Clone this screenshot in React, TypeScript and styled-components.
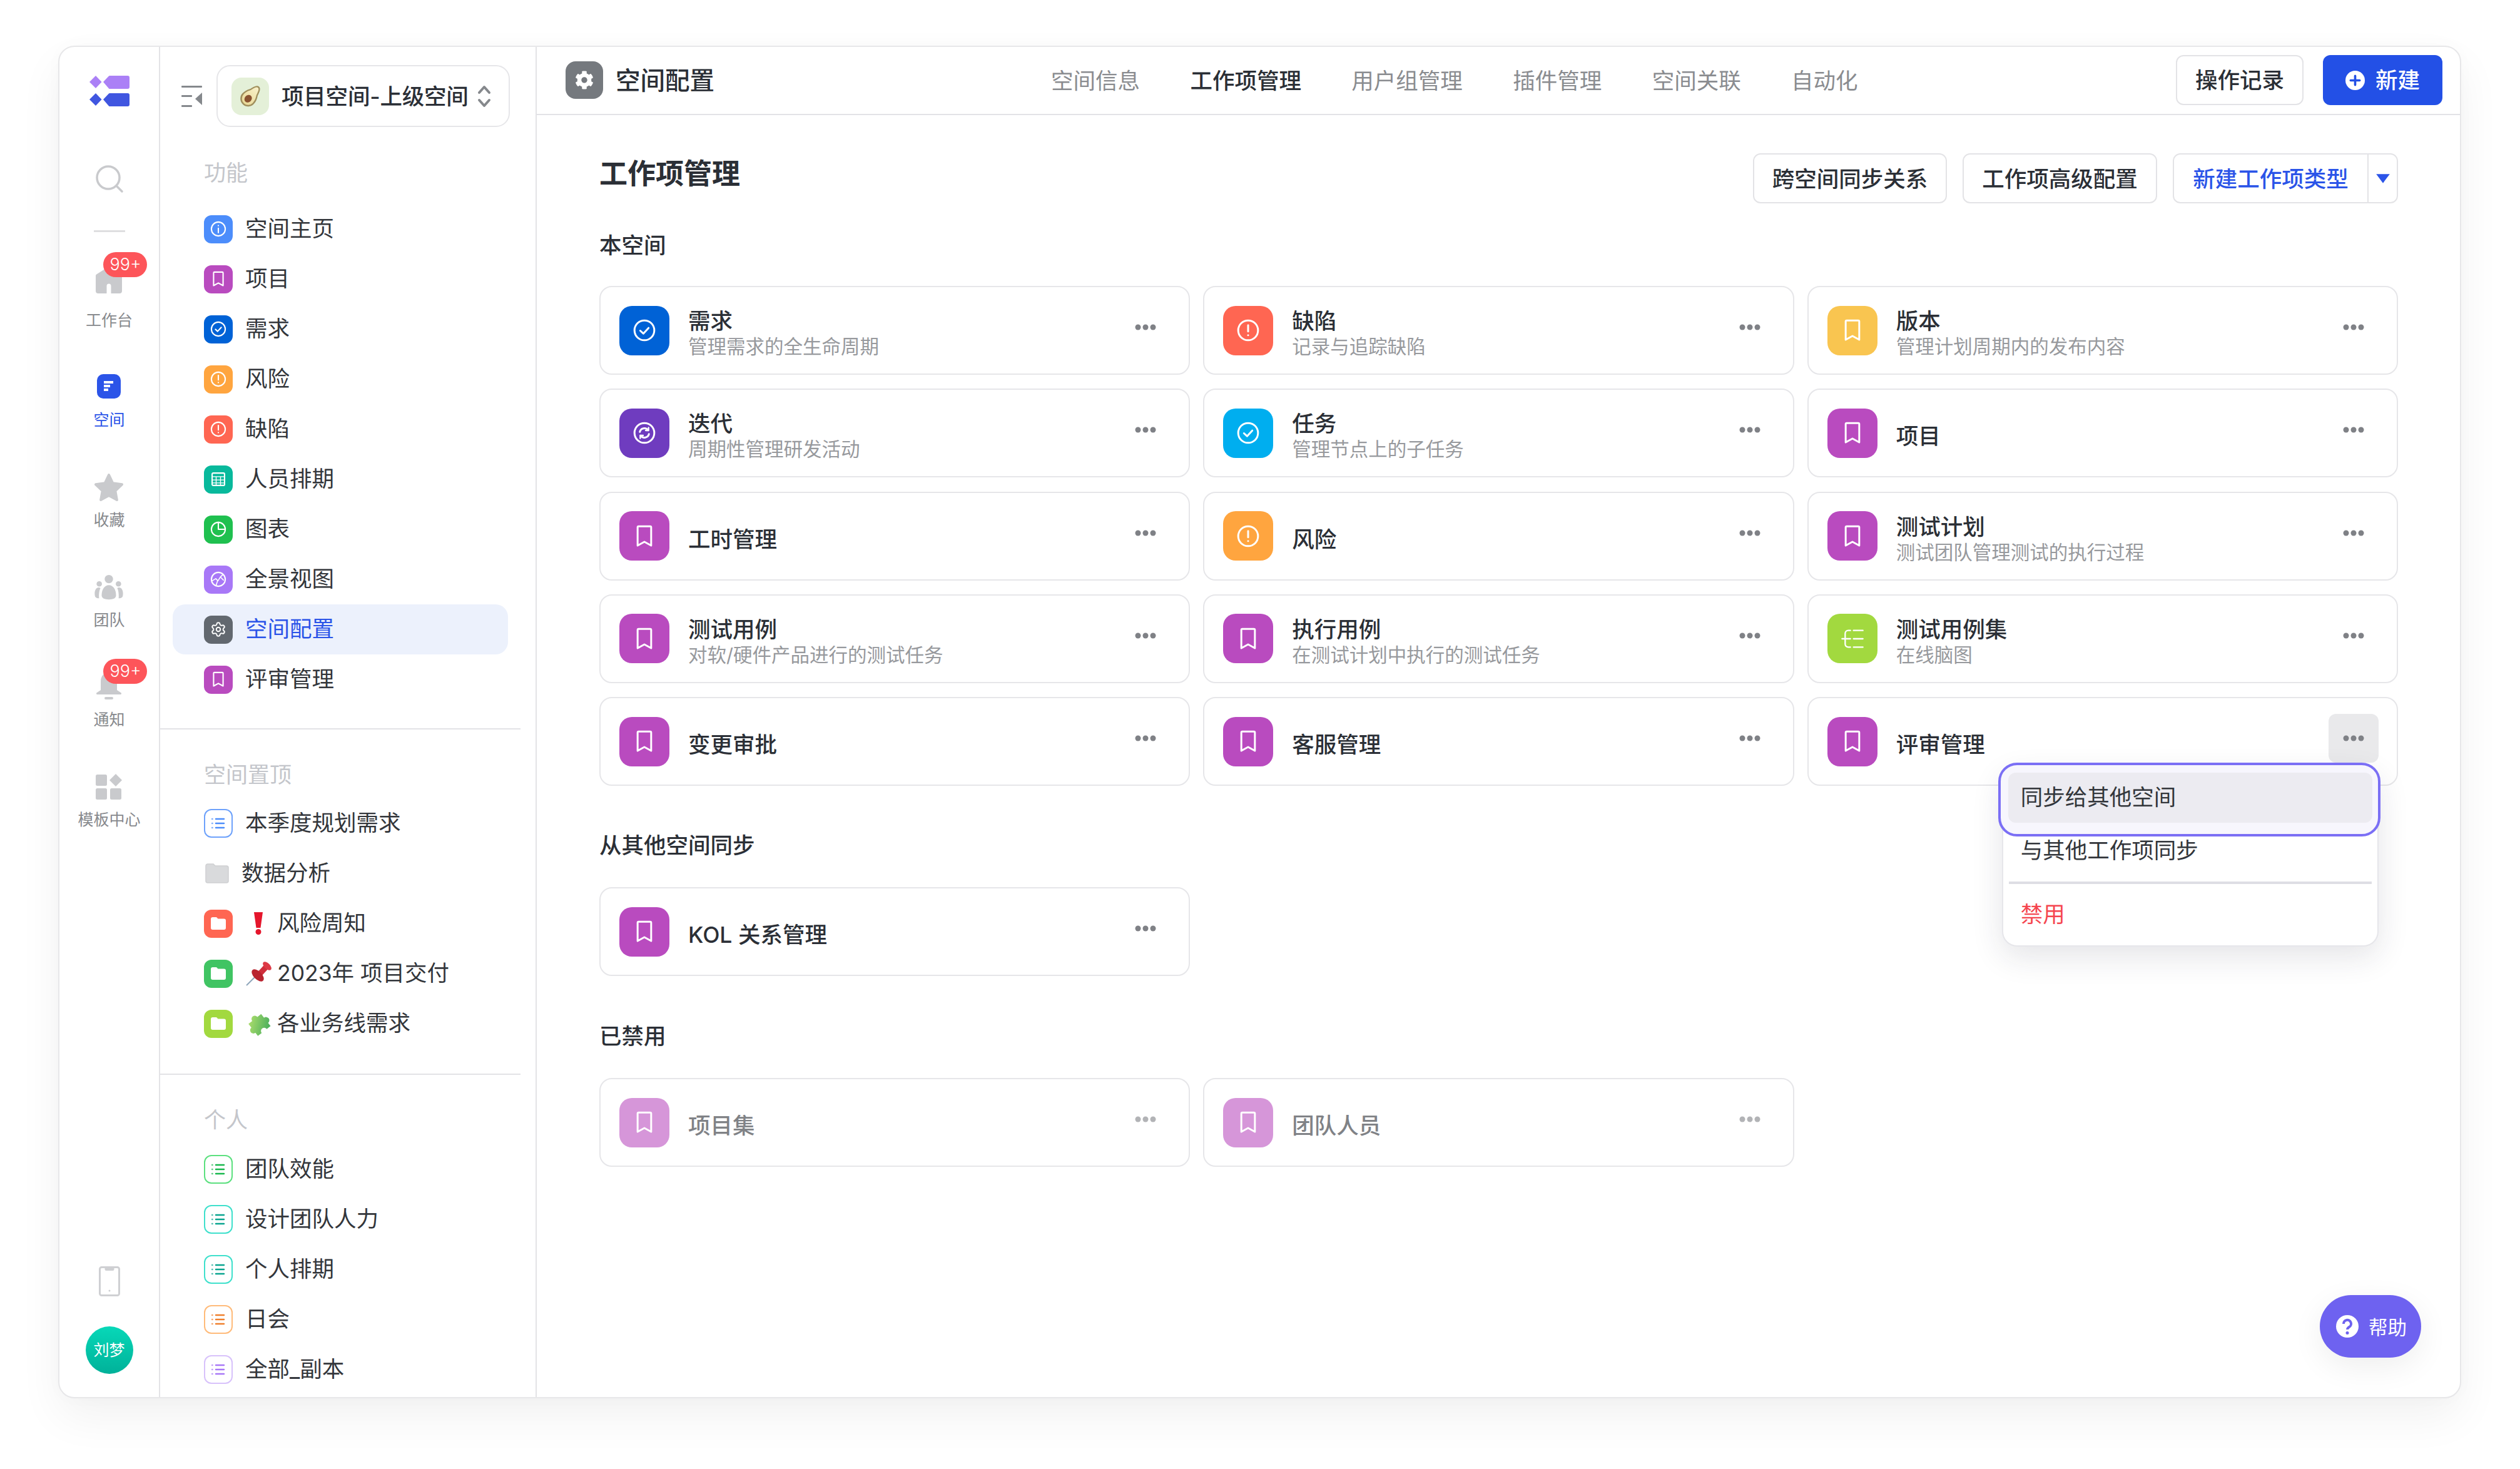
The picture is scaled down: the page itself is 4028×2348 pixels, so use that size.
import React from 'react';
import styled, { createGlobalStyle } from 'styled-components';
import { Settings } from 'lucide-react';
import { FaCog } from 'react-icons/fa';

const Global = createGlobalStyle`
  html, body { margin: 0; padding: 0; background: #fff; }
  body { font-family: Inter, "Noto Sans CJK SC", "Noto Sans", sans-serif; color: #2b2f36; }
  * { box-sizing: border-box; }
`;

const Page = styled.div`
  width: 4028px;
  height: 2348px;
  padding: 73px 94px 113px 93px;
`;
const Window = styled.div`
  height: 100%;
  display: flex;
  overflow: hidden;
  background: #fff;
  border: 2px solid #e7e7e9;
  border-radius: 26px;
  box-shadow: 0 30px 70px rgba(0, 0, 0, 0.055), 0 0 30px rgba(0, 0, 0, 0.02);
`;

/* ---------- rail ---------- */
const Rail = styled.nav`
  flex: 0 0 161px;
  display: flex;
  flex-direction: column;
  align-items: center;
  padding: 45px 0 37px;
  border-right: 2px solid #e3e3e6;
`;
const Search = styled.svg`
  width: 46px;
  height: 46px;
  margin-top: 93px;
`;
const RailRule = styled.div`
  width: 50px;
  height: 3px;
  margin: 59px 0 30px;
  background: #dedee0;
`;
const RailItem = styled.div`
  height: 159.7px;
  display: flex;
  flex-direction: column;
  align-items: center;
  justify-content: flex-end;
  padding-bottom: 34px;
`;
const RailSlot = styled.div<{ $lift?: number }>`
  position: relative;
  width: 46px;
  height: 46px;
  display: flex;
  align-items: center;
  justify-content: center;
  margin-bottom: ${p => 14 + (p.$lift ?? 0)}px;
`;
const RailLabel = styled.div<{ $on?: boolean }>`
  font-size: 25px;
  line-height: 30px;
  white-space: nowrap;
  color: ${p => (p.$on ? '#2b54e8' : '#87898d')};
`;
const Badge = styled.span`
  position: absolute;
  left: 14px;
  top: -20px;
  width: 70px;
  height: 40px;
  border-radius: 20px;
  background: #fd555a;
  color: #fff;
  font-size: 27px;
  font-weight: 300;
  line-height: 40px;
  text-align: center;
`;
const SpaceBox = styled.div`
  width: 38px;
  height: 39px;
  border-radius: 10px;
  background: #2b54e8;
  display: flex;
  align-items: center;
  justify-content: center;
`;
const RailBottom = styled.div`
  margin-top: auto;
  display: flex;
  flex-direction: column;
  align-items: center;
  gap: 48px;
`;
const Avatar = styled.div`
  width: 76px;
  height: 76px;
  border-radius: 50%;
  background: linear-gradient(180deg, #07d8b8, #00b199);
  color: #fff;
  font-size: 25px;
  line-height: 76px;
  text-align: center;
`;

/* ---------- sidebar ---------- */
const Sidebar = styled.aside`
  flex: 0 0 602px;
  display: flex;
  flex-direction: column;
  overflow: hidden;
  border-right: 2px solid #e3e3e6;
`;
const SideHead = styled.div`
  display: flex;
  align-items: center;
  gap: 23px;
  padding: 29px 0 0 34px;
`;
const Selector = styled.div`
  width: 469px;
  height: 99px;
  display: flex;
  align-items: center;
  padding: 0 22px;
  border: 2px solid #e6e6e9;
  border-radius: 22px;
`;
const Avocado = styled.div`
  flex: none;
  width: 60px;
  height: 60px;
  border-radius: 16px;
  background: #e4f0d8;
  display: flex;
  align-items: center;
  justify-content: center;
`;
const SelectorText = styled.div`
  margin-left: 20px;
  padding-top: 2px;
  font-size: 35.5px;
  line-height: 50px;
  font-weight: 500;
  white-space: nowrap;
  color: #2b2f36;
  letter-spacing: -0.2px;
`;
const Chevrons = styled.svg`
  width: 24px;
  height: 36px;
  margin-left: auto;
  margin-right: 5px;
`;
const SideLabel = styled.div<{ $mt: number; $mb: number }>`
  height: 50px;
  margin: ${p => p.$mt}px 0 ${p => p.$mb}px 70px;
  font-size: 35px;
  line-height: 50px;
  color: #c4c6cb;
`;
const SideRule = styled.div<{ $mt: number }>`
  flex: none;
  width: 576px;
  height: 2px;
  margin-top: ${p => p.$mt}px;
  background: #e3e3e6;
`;
const Row = styled.div<{ $on?: boolean }>`
  flex: none;
  height: 80px;
  margin: 0 44px 0 20px;
  padding-left: 50px;
  display: flex;
  align-items: center;
  border-radius: 20px;
  background: ${p => (p.$on ? '#ecf1fc' : 'transparent')};
`;
const RowIcon = styled.div<{ $c: string }>`
  flex: none;
  width: 46px;
  height: 45px;
  border-radius: 12px;
  background: ${p => p.$c};
  display: flex;
  align-items: center;
  justify-content: center;
  color: #fff;
`;
const OutlineIcon = styled.div<{ $c: string }>`
  flex: none;
  width: 46px;
  height: 46px;
  border-radius: 12px;
  border: 2.5px solid ${p => p.$c};
  display: flex;
  align-items: center;
  justify-content: center;
`;
const FolderMark = styled.svg`
  width: 24px;
  height: 20px;
`;
const FolderGrey = styled.svg`
  flex: none;
  width: 38px;
  height: 32px;
  margin-left: 2px;
`;
const RowText = styled.span<{ $on?: boolean; $ml?: number }>`
  margin-left: ${p => p.$ml ?? 20}px;
  font-size: 35.5px;
  line-height: 50px;
  white-space: nowrap;
  color: ${p => (p.$on ? '#2b54e8' : '#33363b')};
`;
const EmojiSlot = styled.span`
  flex: none;
  width: 42px;
  height: 40px;
  margin: 0 -11px 0 20px;
  display: flex;
  align-items: center;
  justify-content: center;
`;

/* ---------- main ---------- */
const Main = styled.main`
  position: relative;
  flex: 1;
  min-width: 0;
  display: flex;
  flex-direction: column;
`;
const TopBar = styled.header`
  flex: none;
  height: 109px;
  display: flex;
  align-items: center;
  padding: 0 28px 2px 46px;
  border-bottom: 2px solid #e3e3e6;
`;
const GearBox = styled.div`
  flex: none;
  width: 60px;
  height: 60px;
  border-radius: 16px;
  background: #75797e;
  display: flex;
  align-items: center;
  justify-content: center;
  color: #fff;
`;
const TopTitle = styled.h1`
  margin: 0 0 0 20px;
  padding-top: 3px;
  font-size: 39.5px;
  line-height: 56px;
  font-weight: 500;
  white-space: nowrap;
`;
const Tabs = styled.div`
  display: flex;
  gap: 80.4px;
  margin-left: 538px;
  padding-top: 5px;
`;
const Tab = styled.span<{ $on?: boolean }>`
  font-size: 35.5px;
  line-height: 50px;
  white-space: nowrap;
  font-weight: ${p => (p.$on ? 500 : 400)};
  color: ${p => (p.$on ? '#2b2f36' : '#8a8c90')};
`;
const TopActions = styled.div`
  margin-left: auto;
  display: flex;
  gap: 31px;
`;
const Button = styled.button<{ $w: number }>`
  width: ${p => p.$w}px;
  height: 80px;
  padding: 3px 0 0;
  background: #fff;
  border: 2px solid #e3e3e6;
  border-radius: 12px;
  font: 500 35.5px/50px Inter, "Noto Sans CJK SC", sans-serif;
  color: #2b2f36;
  white-space: nowrap;
`;
const PrimaryButton = styled.button`
  width: 191px;
  height: 80px;
  display: flex;
  align-items: center;
  justify-content: center;
  gap: 17px;
  padding: 2px 0 0;
  border: 0;
  border-radius: 12px;
  background: #2350e6;
  color: #fff;
  font: 500 35.5px/50px Inter, "Noto Sans CJK SC", sans-serif;
`;
const Content = styled.div`
  flex: 1;
  padding: 61px 99px 0 100px;
`;
const ContentHead = styled.div`
  display: flex;
`;
const ContentTitle = styled.h2`
  margin: 0;
  font-size: 45px;
  line-height: 66px;
  font-weight: 600;
  white-space: nowrap;
`;
const ContentActions = styled.div`
  margin-left: auto;
  display: flex;
  gap: 25px;
`;
const SplitButton = styled.div`
  width: 360px;
  height: 80px;
  display: flex;
  align-items: stretch;
  border: 2px solid #e3e3e6;
  border-radius: 12px;
`;
const SplitMain = styled.span`
  flex: 1;
  text-align: center;
  font-size: 35.5px;
  line-height: 79px;
  font-weight: 500;
  color: #2b54e8;
  white-space: nowrap;
`;
const SplitArrow = styled.span`
  flex: 0 0 47px;
  display: flex;
  align-items: center;
  justify-content: center;
  border-left: 2px solid #e3e3e6;
`;
const Heading = styled.h3<{ $mt: number; $mb: number }>`
  margin: ${p => p.$mt}px 0 ${p => p.$mb}px;
  font-size: 35.5px;
  line-height: 40px;
  font-weight: 500;
  white-space: nowrap;
`;
const Cards = styled.div`
  display: grid;
  grid-template-columns: repeat(3, 1fr);
  column-gap: 21px;
  row-gap: 22.25px;
`;
const Card = styled.div`
  position: relative;
  height: 142px;
  display: flex;
  align-items: center;
  padding: 0 29px 0 30px;
  background: #fff;
  border: 2px solid #e6e6e9;
  border-radius: 20px;
`;
const CardIcon = styled.div<{ $c: string; $off?: boolean }>`
  flex: none;
  width: 80px;
  height: 79px;
  border-radius: 20px;
  background: ${p => p.$c};
  opacity: ${p => (p.$off ? 0.58 : 1)};
  display: flex;
  align-items: center;
  justify-content: center;
  color: #fff;
`;
const CardText = styled.div`
  flex: 1;
  min-width: 0;
  margin-left: 30px;
  padding-top: 12px;
`;
const CardTitle = styled.div<{ $off?: boolean }>`
  font-size: 35.5px;
  line-height: 40px;
  font-weight: 500;
  color: ${p => (p.$off ? '#808286' : '#2b2f36')};
  white-space: nowrap;
`;
const CardSub = styled.div`
  font-size: 30.5px;
  line-height: 40px;
  color: #97999d;
  white-space: nowrap;
`;
const More = styled.div<{ $on?: boolean; $off?: boolean }>`
  flex: none;
  align-self: flex-start;
  width: 80px;
  height: 78px;
  margin-top: 25px;
  border-radius: 12px;
  background: ${p => (p.$on ? '#e9e9eb' : 'transparent')};
  display: flex;
  align-items: center;
  justify-content: center;
  opacity: ${p => (p.$off ? 0.6 : 1)};
`;
const Menu = styled.div`
  position: absolute;
  z-index: 3;
  left: 309px;
  top: 109px;
  width: 602px;
  height: 288px;
  background: #fff;
  border: 2px solid #e6e6ea;
  border-radius: 24px;
  box-shadow: 0 16px 50px rgba(30, 30, 60, 0.12);
`;
const MenuFocus = styled.div`
  margin: -8px -5px 0 -8px;
  padding: 12px 9px 18px 12px;
  height: 118px;
  background: #f7f6fd;
  border: 4px solid #7b6ff5;
  border-radius: 30px;
`;
const MenuHover = styled.div`
  height: 80px;
  padding-left: 20px;
  border-radius: 12px;
  background: #ecebf1;
  font-size: 35.5px;
  line-height: 80px;
  color: #33363b;
`;
const MenuItem = styled.div<{ $danger?: boolean; $h: number }>`
  height: ${p => p.$h}px;
  padding-left: 28px;
  font-size: 35.5px;
  line-height: ${p => p.$h}px;
  color: ${p => (p.$danger ? '#f5454f' : '#33363b')};
`;
const MenuRule = styled.div`
  height: 4px;
  margin: 26px 9px 0 9px;
  background: #dedee4;
`;
const Help = styled.div`
  position: absolute;
  right: 62px;
  bottom: 63px;
  width: 162px;
  height: 100px;
  border-radius: 50px;
  background: #6e62f0;
  color: #fff;
  display: flex;
  align-items: center;
  gap: 16px;
  padding-left: 26px;
  font-size: 30.5px;
  box-shadow: 0 14px 50px rgba(0, 0, 0, 0.07);
`;

/* ---------- drawings ---------- */
type Kind = 'info' | 'bookmark' | 'check' | 'alert' | 'table' | 'pie' | 'globe' | 'loop' | 'mind';

const TypeGlyph = ({ kind, size }: { kind: Kind; size: number }) => {
  const common = { fill: 'none', stroke: '#fff', strokeWidth: 1.8, strokeLinecap: 'round' as const, strokeLinejoin: 'round' as const };
  return (
    <svg width={size} height={size} viewBox="0 0 24 24" {...common}>
      {kind === 'bookmark' && <path d="M5.5 3.5a1 1 0 0 1 1-1h11a1 1 0 0 1 1 1V21l-6.500-3.600L5.500 21Z" />}
      {kind === 'check' && (<><circle cx="12" cy="12" r="9.500" /><path d="M8 12.300l3 2.800 5-5.400" /></>)}
      {kind === 'alert' && (<><circle cx="12" cy="12" r="9.500" /><path d="M12 7v6" /><path d="M12 16.600v.1" /></>)}
      {kind === 'info' && (<><circle cx="12" cy="12" r="9.500" /><path d="M12 11v6" /><path d="M12 7.400v.1" /></>)}
      {kind === 'table' && (<><rect x="3.500" y="3.500" width="17" height="17" rx="1.500" /><path d="M3.500 8.500h17M3.500 13h17M3.500 17h17M9 8.500v12M15 8.500v12" strokeWidth="1.200" /></>)}
      {kind === 'pie' && (<><circle cx="12" cy="12" r="9.500" /><path d="M12 2.500V12h8" /></>)}
      {kind === 'globe' && (<><circle cx="12" cy="12" r="9.500" /><path d="M3.500 14l5-3 3 3 3.500-5.500 3.500-3M9 20l2-6M15 9l4 4" strokeWidth="1.400" /></>)}
      {kind === 'loop' && (<><circle cx="12" cy="12" r="9.500" /><path d="M7.600 11a4.500 4.500 0 0 1 8-1.600M16.400 13a4.500 4.500 0 0 1-8 1.600" /><path d="M16 6.800v2.800h-2.800M8 17.200v-2.800h2.800" strokeWidth="1.400" /></>)}
      {kind === 'mind' && (<><path d="M10 4H8a3 3 0 0 0-3 3v10a3 3 0 0 0 3 3h2" strokeWidth="1.400" /><path d="M2 12h8M13 4h9M13 12h9M13 20h9" strokeWidth="1.400" /></>)}
    </svg>
  );
};

const Dots = () => (
  <svg width="34" height="10" viewBox="0 0 34 10" fill="#7f8186">
    <circle cx="5" cy="5" r="4.500" /><circle cx="17" cy="5" r="4.500" /><circle cx="29" cy="5" r="4.500" />
  </svg>
);

const ListGlyph = ({ c }: { c: string }) => (
  <svg width="24" height="20" viewBox="0 0 24 20" stroke={c} strokeWidth="2.400" strokeLinecap="round" fill="none">
    <path d="M8 3h13M8 10h13M8 17h13" /><path d="M2 3h.6M2 10h.6M2 17h.6" opacity=".7" />
  </svg>
);

const Logo = () => (
  <svg width="65" height="50" viewBox="0 0 65 50">
    <g fill="#ab80f6">
      <path d="M11 1l9.500 10L11 21 1 11Z" />
      <path d="M23 11L32 1.500a2 2 0 0 1 1.500-.5H62a3 3 0 0 1 3 3v15a3 3 0 0 1-3 3H33.500a2 2 0 0 1-1.500-.6Z" />
    </g>
    <g fill="#4056e0">
      <path d="M11 29l9.500 10L11 49 1 39Z" />
      <path d="M23 39l9-9.500a2 2 0 0 1 1.500-.5H62a3 3 0 0 1 3 3v15a3 3 0 0 1-3 3H33.500a2 2 0 0 1-1.500-.6Z" />
    </g>
  </svg>
);

const grey = '#c9cacd';
const HomeIcon = () => (
  <svg width="42" height="46" viewBox="0 0 42 46" fill={grey}>
    <path d="M21 3L40 15a3 3 0 0 1 2 3V42a4 4 0 0 1-4 4H24.500V34a3.500 3.500 0 0 0-7 0V46H4a4 4 0 0 1-4-4V18a3 3 0 0 1 2-3Z" />
  </svg>
);
const StarIcon = () => (
  <svg width="46" height="46" viewBox="0 0 46 46" fill={grey} stroke={grey} strokeWidth="4" strokeLinejoin="round">
    <path d="M23 3l6.300 13.300 14.700 2-10.700 10.200 2.600 14.500L23 36l-12.900 7 2.600-14.500L2 18.300l14.700-2Z" />
  </svg>
);
const TeamIcon = () => (
  <svg width="48" height="42" viewBox="0 0 48 42" fill={grey}>
    <circle cx="24" cy="7" r="7" /><circle cx="8" cy="15" r="4.500" /><circle cx="40" cy="15" r="4.500" />
    <path d="M12 34c0-10 5-17 12-17s12 7 12 17c0 5-5 7-12 7s-12-2-12-7Z" />
    <path d="M1 36c-2-8 1-15 6-15 1 0 2 .3 3 1-1.500 3-2.500 7-2.500 14 0 1 0 2 .4 3-3 0-5.900-1-6.900-3ZM47 36c2-8-1-15-6-15-1 0-2 .3-3 1 1.500 3 2.500 7 2.500 14 0 1 0 2-.4 3 3 0 5.900-1 6.900-3Z" />
  </svg>
);
const BellIcon = () => (
  <svg width="42" height="46" viewBox="0 0 42 46" fill={grey}>
    <path d="M21 2c-8 0-13 6-13 14v14l-6 4a1.500 1.500 0 0 0 1 3h36a1.500 1.500 0 0 0 1-3l-6-4V16c0-8-5-14-13-14Z" />
    <rect x="14" y="41" width="14" height="4" rx="2" />
  </svg>
);
const GridIcon = () => (
  <svg width="42" height="42" viewBox="0 0 42 42" fill={grey}>
    <rect x="0" y="1" width="18" height="18" rx="2.500" />
    <rect x="0" y="23" width="18" height="18" rx="2.500" />
    <rect x="23" y="23" width="18" height="18" rx="2.500" />
    <path d="M32 0l10 10-10 10-10-10Z" />
  </svg>
);
const PhoneIcon = () => (
  <svg width="34" height="48" viewBox="0 0 34 48" fill="none" stroke="#cfd0d3" strokeWidth="3">
    <rect x="1.500" y="1.500" width="31" height="45" rx="3" />
    <path d="M11 2.500h12v2a1 1 0 0 1-1 1H12a1 1 0 0 1-1-1Z" fill="#cfd0d3" />
    <circle cx="17" cy="39" r="1.500" fill="#cfd0d3" stroke="none" />
  </svg>
);
const AvocadoIcon = () => (
  <svg width="42" height="42" viewBox="0 0 42 42">
    <defs>
      <linearGradient id="avoFlesh" x1="0" y1="0" x2="0" y2="1">
        <stop offset="0" stopColor="#f8f0c8" /><stop offset="1" stopColor="#e9d998" />
      </linearGradient>
    </defs>
    <g transform="rotate(42 21 21)">
      <path d="M21 0c4.500 0 6.500 6 8 12 3 5 4.500 9 4.500 14a12.500 12.500 0 0 1-25 0c0-5 1.500-9 4.500-14 1.500-6 3.500-12 8-12Z" fill="#a08f5c" />
      <path d="M21 2.500c3 0 4.500 5 6 10.500 3 5 4 8.500 4 13a10 10 0 0 1-20 0c0-4.500 1-8 4-13 1.500-5.500 3-10.500 6-10.500Z" fill="url(#avoFlesh)" />
      <ellipse cx="21" cy="26" rx="5.500" ry="6.500" fill="#8a5230" />
    </g>
  </svg>
);

const WhiteFolder = () => (
  <FolderMark viewBox="0 0 24 20" fill="#fff">
    <path d="M0 3a3 3 0 0 1 3-3h6l2.500 2.500H21a3 3 0 0 1 3 3V17a3 3 0 0 1-3 3H3a3 3 0 0 1-3-3Z" />
  </FolderMark>
);

const Exclaim = () => (
  <svg width="14" height="36" viewBox="0 0 14 36">
    <path d="M0 0h14l-3.500 25h-7Z" fill="#e5162c" /><circle cx="7" cy="31.500" r="4.500" fill="#e5162c" />
  </svg>
);
const Pin = () => (
  <svg width="42" height="40" viewBox="0 0 42 40">
    <path d="M2 39l18-18" stroke="#8fa6bb" strokeWidth="2" />
    <path d="M20 24L33 10" stroke="#cf2f3c" strokeWidth="9" />
    <ellipse cx="20" cy="23" rx="12" ry="6.500" transform="rotate(45 20 23)" fill="#b9232f" />
    <ellipse cx="35" cy="8" rx="8.500" ry="4.500" transform="rotate(45 35 8)" fill="#dd3a46" />
  </svg>
);
const Puzzle = () => (
  <svg width="42" height="40" viewBox="3 3 36 34">
    <defs>
      <linearGradient id="puzzleFill" x1="0" y1="0" x2="1" y2="1">
        <stop offset="0" stopColor="#bde56f" /><stop offset="1" stopColor="#3fa95a" />
      </linearGradient>
    </defs>
    <path
      transform="rotate(-38 21 20)"
      d="M10 12h6.500a4.500 4.500 0 1 1 9 0H32v6.500a4.500 4.500 0 1 1 0 9V33h-6.500a4.500 4.500 0 1 0-9 0H10v-5.500a4.500 4.500 0 1 1 0-9Z"
      fill="url(#puzzleFill)"
    />
  </svg>
);

/* ---------- data ---------- */
const PURPLE = '#b94bbf';
const fnRows: { c: string; k?: Kind; t: string; on?: boolean }[] = [
  { c: '#4c8dfb', k: 'info', t: '空间主页' },
  { c: PURPLE, k: 'bookmark', t: '项目' },
  { c: '#0062d6', k: 'check', t: '需求' },
  { c: '#ffa53f', k: 'alert', t: '风险' },
  { c: '#ff6652', k: 'alert', t: '缺陷' },
  { c: '#08b99c', k: 'table', t: '人员排期' },
  { c: '#1fc04f', k: 'pie', t: '图表' },
  { c: '#a878f7', k: 'globe', t: '全景视图' },
  { c: '#62686f', t: '空间配置', on: true },
  { c: PURPLE, k: 'bookmark', t: '评审管理' },
];
const personal = [
  { b: '#5ce07f', l: '#17b84c', t: '团队效能' },
  { b: '#3fe0cc', l: '#08a48f', t: '设计团队人力' },
  { b: '#3fe0cc', l: '#08a48f', t: '个人排期' },
  { b: '#ffbb7a', l: '#ef7f2c', t: '日会' },
  { b: '#d8c2fb', l: '#a878f7', t: '全部_副本' },
];
const cardsA: { c: string; k: Kind; t: string; s?: string }[] = [
  { c: '#0062d6', k: 'check', t: '需求', s: '管理需求的全生命周期' },
  { c: '#ff6652', k: 'alert', t: '缺陷', s: '记录与追踪缺陷' },
  { c: '#f9c550', k: 'bookmark', t: '版本', s: '管理计划周期内的发布内容' },
  { c: '#6f3cbf', k: 'loop', t: '迭代', s: '周期性管理研发活动' },
  { c: '#00aeef', k: 'check', t: '任务', s: '管理节点上的子任务' },
  { c: PURPLE, k: 'bookmark', t: '项目' },
  { c: PURPLE, k: 'bookmark', t: '工时管理' },
  { c: '#ffa53f', k: 'alert', t: '风险' },
  { c: PURPLE, k: 'bookmark', t: '测试计划', s: '测试团队管理测试的执行过程' },
  { c: PURPLE, k: 'bookmark', t: '测试用例', s: '对软/硬件产品进行的测试任务' },
  { c: PURPLE, k: 'bookmark', t: '执行用例', s: '在测试计划中执行的测试任务' },
  { c: '#a2d93f', k: 'mind', t: '测试用例集', s: '在线脑图' },
  { c: PURPLE, k: 'bookmark', t: '变更审批' },
  { c: PURPLE, k: 'bookmark', t: '客服管理' },
];

const ItemCard = ({ c, k, t, s, off, on, children }: { c: string; k: Kind; t: string; s?: string; off?: boolean; on?: boolean; children?: React.ReactNode }) => (
  <Card>
    <CardIcon $c={c} $off={off}><TypeGlyph kind={k} size={40} /></CardIcon>
    <CardText>
      <CardTitle $off={off}>{t}</CardTitle>
      {s && <CardSub>{s}</CardSub>}
    </CardText>
    <More $on={on} $off={off}><Dots /></More>
    {children}
  </Card>
);

export default function App() {
  return (
    <Page>
      <Global />
      <Window>
        <Rail>
          <Logo />
          <Search viewBox="0 0 46 46" fill="none" stroke="#c9cacd" strokeWidth="3.500" strokeLinecap="round">
            <circle cx="21" cy="21" r="18" /><path d="M34 34l9 9" />
          </Search>
          <RailRule />
          <RailItem>
            <RailSlot $lift={14}><HomeIcon /><Badge>99+</Badge></RailSlot>
            <RailLabel>工作台</RailLabel>
          </RailItem>
          <RailItem>
            <RailSlot $lift={2}>
              <SpaceBox>
                <svg width="20" height="20" viewBox="0 0 20 20" fill="#fff">
                  <rect x="2" y="2" width="15" height="4" /><rect x="2" y="8" width="10" height="4" /><rect x="2" y="14" width="7" height="4" />
                </svg>
              </SpaceBox>
            </RailSlot>
            <RailLabel $on>空间</RailLabel>
          </RailItem>
          <RailItem>
            <RailSlot><StarIcon /></RailSlot>
            <RailLabel>收藏</RailLabel>
          </RailItem>
          <RailItem>
            <RailSlot><TeamIcon /></RailSlot>
            <RailLabel>团队</RailLabel>
          </RailItem>
          <RailItem>
            <RailSlot $lift={2}><BellIcon /><Badge>99+</Badge></RailSlot>
            <RailLabel>通知</RailLabel>
          </RailItem>
          <RailItem>
            <RailSlot><GridIcon /></RailSlot>
            <RailLabel>模板中心</RailLabel>
          </RailItem>
          <RailBottom>
            <PhoneIcon />
            <Avatar>刘梦</Avatar>
          </RailBottom>
        </Rail>

        <Sidebar>
          <SideHead>
            <svg width="33" height="34" viewBox="0 0 33 34" fill="#85888c">
              <rect y="0" width="33" height="3" rx="1" /><rect y="15" width="17" height="3" rx="1" /><rect y="31" width="17" height="3" rx="1" />
              <path d="M33 11v20L22 21Z" />
            </svg>
            <Selector>
              <Avocado><AvocadoIcon /></Avocado>
              <SelectorText>项目空间-上级空间</SelectorText>
              <Chevrons viewBox="0 0 24 36" fill="none" stroke="#85888c" strokeWidth="4" strokeLinecap="round" strokeLinejoin="round">
                <path d="M4 12l8-9 8 9M4 24l8 9 8-9" />
              </Chevrons>
            </Selector>
          </SideHead>

          <SideLabel $mt={48} $mb={25}>功能</SideLabel>
          {fnRows.map(r => (
            <Row key={r.t} $on={r.on}>
              <RowIcon $c={r.c}>
                {r.k ? <TypeGlyph kind={r.k} size={28} /> : <Settings size={26} strokeWidth={1.8} />}
              </RowIcon>
              <RowText $on={r.on}>{r.t}</RowText>
            </Row>
          ))}

          <SideRule $mt={38} />
          <SideLabel $mt={47} $mb={13}>空间置顶</SideLabel>
          <Row>
            <OutlineIcon $c="#6ea2fb"><ListGlyph c="#4c8dfb" /></OutlineIcon>
            <RowText>本季度规划需求</RowText>
          </Row>
          <Row>
            <FolderGrey viewBox="0 0 38 32" fill="#d9dadc" stroke="#cfd0d2" strokeWidth="1.500">
              <path d="M1 4a3 3 0 0 1 3-3h9l3 3h18a3 3 0 0 1 3 3v21a3 3 0 0 1-3 3H4a3 3 0 0 1-3-3Z" />
            </FolderGrey>
            <RowText>数据分析</RowText>
          </Row>
          <Row>
            <RowIcon $c="#ff6652"><WhiteFolder /></RowIcon>
            <EmojiSlot><Exclaim /></EmojiSlot>
            <RowText>风险周知</RowText>
          </Row>
          <Row>
            <RowIcon $c="#40c463"><WhiteFolder /></RowIcon>
            <EmojiSlot><Pin /></EmojiSlot>
            <RowText>2023年 项目交付</RowText>
          </Row>
          <Row>
            <RowIcon $c="#a2d93f"><WhiteFolder /></RowIcon>
            <EmojiSlot><Puzzle /></EmojiSlot>
            <RowText>各业务线需求</RowText>
          </Row>

          <SideRule $mt={40} />
          <SideLabel $mt={47} $mb={14}>个人</SideLabel>
          {personal.map(r => (
            <Row key={r.t}>
              <OutlineIcon $c={r.b}><ListGlyph c={r.l} /></OutlineIcon>
              <RowText>{r.t}</RowText>
            </Row>
          ))}
        </Sidebar>

        <Main>
          <TopBar>
            <GearBox><FaCog size={30} /></GearBox>
            <TopTitle>空间配置</TopTitle>
            <Tabs>
              <Tab>空间信息</Tab>
              <Tab $on>工作项管理</Tab>
              <Tab>用户组管理</Tab>
              <Tab>插件管理</Tab>
              <Tab>空间关联</Tab>
              <Tab>自动化</Tab>
            </Tabs>
            <TopActions>
              <Button $w={204}>操作记录</Button>
              <PrimaryButton>
                <svg width="31" height="31" viewBox="0 0 30 30">
                  <circle cx="15" cy="15" r="15" fill="#fff" />
                  <path d="M15 8v14M8 15h14" stroke="#2350e6" strokeWidth="3.500" strokeLinecap="round" />
                </svg>
                新建
              </PrimaryButton>
            </TopActions>
          </TopBar>

          <Content>
            <ContentHead>
              <ContentTitle>工作项管理</ContentTitle>
              <ContentActions>
                <Button $w={310}>跨空间同步关系</Button>
                <Button $w={311}>工作项高级配置</Button>
                <SplitButton>
                  <SplitMain>新建工作项类型</SplitMain>
                  <SplitArrow>
                    <svg width="24" height="17" viewBox="0 0 20 14"><path d="M1 1h18L10 13Z" fill="#2b54e8" /></svg>
                  </SplitArrow>
                </SplitButton>
              </ContentActions>
            </ContentHead>

            <Heading $mt={48} $mb={44}>本空间</Heading>
            <Cards>
              {cardsA.map(c => <ItemCard key={c.t} c={c.c} k={c.k} t={c.t} s={c.s} />)}
              <ItemCard c={PURPLE} k="bookmark" t="评审管理" on>
                <Menu>
                  <MenuFocus><MenuHover>同步给其他空间</MenuHover></MenuFocus>
                  <MenuItem $h={46}>与其他工作项同步</MenuItem>
                  <MenuRule />
                  <MenuItem $danger $h={98}>禁用</MenuItem>
                </Menu>
              </ItemCard>
            </Cards>

            <Heading $mt={76} $mb={46}>从其他空间同步</Heading>
            <Cards>
              <ItemCard c={PURPLE} k="bookmark" t="KOL 关系管理" />
            </Cards>

            <Heading $mt={77} $mb={46}>已禁用</Heading>
            <Cards>
              <ItemCard c={PURPLE} k="bookmark" t="项目集" off />
              <ItemCard c={PURPLE} k="bookmark" t="团队人员" off />
            </Cards>
          </Content>

          <Help>
            <svg width="36" height="36" viewBox="0 0 36 36">
              <circle cx="18" cy="18" r="18" fill="#fff" />
              <path d="M12 14a6 6 0 1 1 9 5c-2 1.200-3 2-3 4" fill="none" stroke="#6e62f0" strokeWidth="4" />
              <circle cx="18" cy="28.500" r="2.500" fill="#6e62f0" />
            </svg>
            帮助
          </Help>
        </Main>
      </Window>
    </Page>
  );
}
